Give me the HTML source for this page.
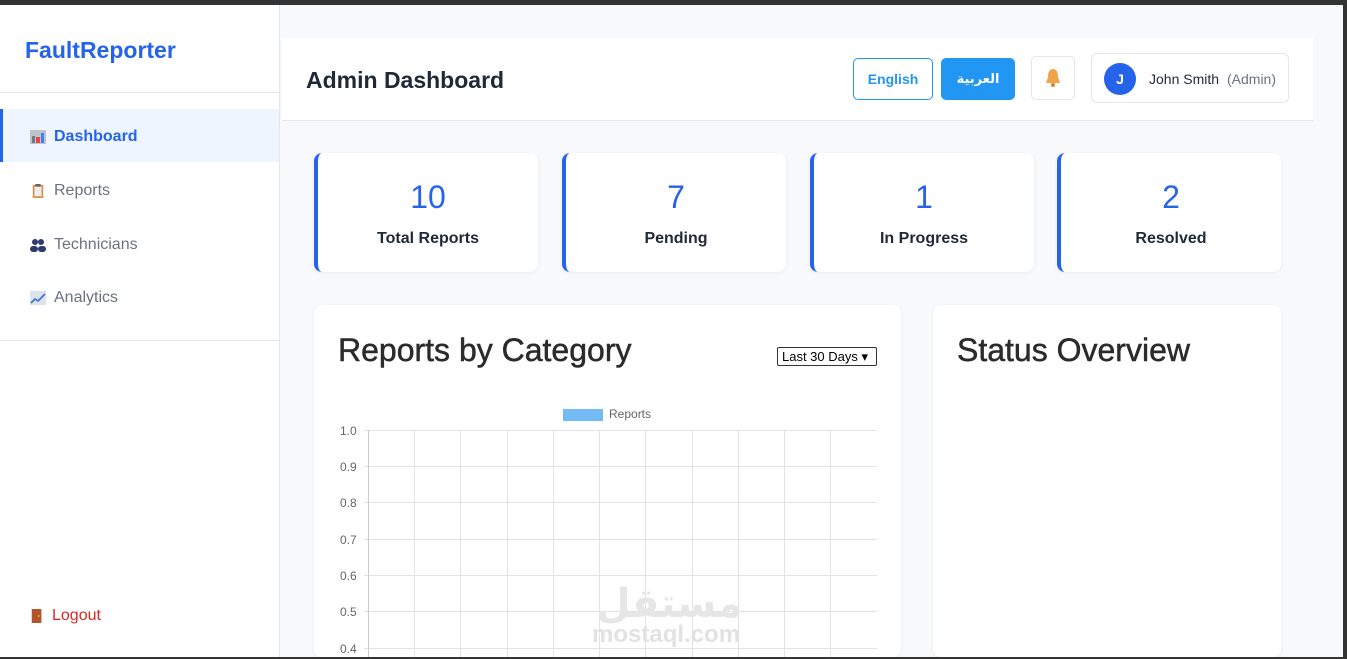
<!DOCTYPE html>
<html><head><meta charset="utf-8"><style>
*{box-sizing:border-box;margin:0;padding:0}
body{width:1347px;height:659px;overflow:hidden;background:#333;font-family:"Liberation Sans","DejaVu Sans",sans-serif;position:relative}
#app{position:absolute;left:0;top:5px;width:1343px;height:652px;background:#f8f9fb;overflow:hidden}
.side{position:absolute;left:0;top:0;width:280px;height:652px;background:#fff;border-right:1px solid #e3e6ea}
.logo{position:absolute;left:25px;top:32px;font-size:23px;font-weight:bold;color:#2563eb}
.hr{position:absolute;left:0;width:279px;height:1px;background:#e3e6ea}
.nav{position:absolute;left:0;width:279px;height:53px;display:flex;align-items:center;padding-left:30px;padding-top:3px;font-size:16px;color:#6b7280}
.nav .ic{width:16px;height:14px;margin-right:8px;display:inline-block}
.nav.act{background:#eef5ff;color:#2563eb;border-left:3px solid #2563eb;padding-left:27px;font-weight:bold}
.logout{color:#dc2626}
.head{position:absolute;left:282px;top:33px;width:1031px;height:83px;background:#fff;border-bottom:1px solid #e3e6ea}
.head h1{position:absolute;left:24px;top:29px;font-size:23px;font-weight:bold;color:#1f2937}
.btn{position:absolute;top:20px;height:42px;border-radius:5px;font-size:14px;font-weight:bold;display:flex;align-items:center;justify-content:center}
.card{position:absolute;top:148px;width:224px;height:119px;background:#fff;border-radius:8px;border-left:4px solid #2563eb;box-shadow:0 1px 4px rgba(0,0,0,.06);text-align:center}
.card .n{margin-top:24px;font-size:32px;color:#2563eb;line-height:40px}
.card .l{margin-top:13px;font-size:16px;color:#1f2937;font-weight:bold}
.panel{position:absolute;top:300px;background:#fff;border-radius:8px;box-shadow:0 1px 4px rgba(0,0,0,.06);height:352px;overflow:hidden}
.panel h2{position:absolute;left:24px;top:27px;font-size:32px;font-weight:normal;color:#2b2b2b;-webkit-text-stroke:0.5px #2b2b2b}
</style></head><body><div id="app">
<div class="side">
<div class="logo">FaultReporter</div>
<div class="hr" style="top:87px"></div>
<div class="nav act" style="top:104px"><svg class="ic" viewBox="0 0 16 14"><rect x="0" y="0" width="16" height="14" fill="#bcc3cb"/><rect x="2" y="6" width="3" height="7" fill="#777"/><rect x="6" y="7" width="4" height="6" fill="#ef4444"/><rect x="11" y="3" width="3" height="10" fill="#3b82f6"/></svg>Dashboard</div>
<div class="nav" style="top:158px"><svg class="ic" viewBox="0 0 16 16"><rect x="2" y="1" width="12" height="15" fill="#d9904a"/><rect x="4" y="3" width="8" height="11" fill="#eee"/><rect x="5" y="0" width="6" height="3" fill="#666"/></svg>Reports</div>
<div class="nav" style="top:212px"><svg class="ic" viewBox="0 0 16 14"><circle cx="5" cy="4" r="3" fill="#2d3a6b"/><circle cx="11" cy="4" r="3" fill="#2d3a6b"/><rect x="0" y="8" width="8" height="6" rx="3" fill="#2d3a6b"/><rect x="8" y="8" width="8" height="6" rx="3" fill="#2d3a6b"/></svg>Technicians</div>
<div class="nav" style="top:265px"><svg class="ic" viewBox="0 0 16 14"><rect width="16" height="14" fill="#dde3ea"/><polyline points="1,12 5,8 8,10 15,3" stroke="#3b6fd6" stroke-width="1.6" fill="none"/></svg>Analytics</div>
<div class="hr" style="top:335px"></div>
<div class="nav logout" style="top:583px"><svg class="ic" viewBox="0 0 16 16" style="width:14px"><rect x="2" y="0" width="11" height="16" fill="#b3542a"/><circle cx="10" cy="8" r="1" fill="#fc0"/></svg>Logout</div>
</div>
<div class="head">
<h1>Admin Dashboard</h1>
<div class="btn" style="left:571px;width:80px;border:1px solid #2196f3;color:#2196f3;background:#fff">English</div>
<div class="btn" style="left:659px;width:74px;background:#2196f3;color:#fff;font-family:'DejaVu Sans',sans-serif;font-size:13px">العربية</div>
<div class="btn" style="left:749px;top:18px;width:44px;height:44px;border:1px solid #e3e6ea;background:#fff"><svg width="18" height="20" viewBox="0 0 18 20"><path d="M9 1C5 1 4 5 4 9L2 15H16L14 9C14 5 13 1 9 1Z" fill="#f0a54a"/><circle cx="9" cy="17" r="2" fill="#d98a2b"/></svg></div>
<div style="position:absolute;left:809px;top:15px;width:198px;height:50px;border:1px solid #e3e6ea;border-radius:6px;background:#fff">
<div style="position:absolute;left:12px;top:9px;width:32px;height:32px;border-radius:50%;background:#2563eb;color:#fff;font-weight:bold;font-size:14px;text-align:center;line-height:32px">J</div>
<div style="position:absolute;left:57px;top:17px;font-size:14px;color:#1f2937">John Smith</div>
<div style="position:absolute;left:135px;top:17px;font-size:14px;color:#6b7280">(Admin)</div>
</div>
</div>
<div class="card" style="left:314px"><div class="n">10</div><div class="l">Total Reports</div></div>
<div class="card" style="left:562px"><div class="n">7</div><div class="l">Pending</div></div>
<div class="card" style="left:810px"><div class="n">1</div><div class="l">In Progress</div></div>
<div class="card" style="left:1057px"><div class="n">2</div><div class="l">Resolved</div></div>
<div class="panel" style="left:314px;width:587px">
<h2>Reports by Category</h2>
<div style="position:absolute;left:463px;top:42px;width:100px;height:19px;border:1px solid #333;border-radius:2px;font-size:13px;color:#000;padding-left:4px;line-height:17px">Last 30 Days ▾</div>
<svg style="position:absolute;left:0;top:0" width="587" height="360" font-family="Liberation Sans,sans-serif" font-size="12" fill="#666">
<rect x="249" y="104" width="40" height="12" fill="#74baf5"/><text x="295" y="113">Reports</text>
<g stroke="#e3e3e3" stroke-width="1">
<line x1="50" y1="125.5" x2="563" y2="125.5"/><line x1="50" y1="161.5" x2="563" y2="161.5"/><line x1="50" y1="197.5" x2="563" y2="197.5"/><line x1="50" y1="234.5" x2="563" y2="234.5"/><line x1="50" y1="270.5" x2="563" y2="270.5"/><line x1="50" y1="306.5" x2="563" y2="306.5"/><line x1="50" y1="343.5" x2="563" y2="343.5"/>
<line x1="100.5" y1="125" x2="100.5" y2="360"/><line x1="146.5" y1="125" x2="146.5" y2="360"/><line x1="193.5" y1="125" x2="193.5" y2="360"/><line x1="239.5" y1="125" x2="239.5" y2="360"/><line x1="285.5" y1="125" x2="285.5" y2="360"/><line x1="331.5" y1="125" x2="331.5" y2="360"/><line x1="378.5" y1="125" x2="378.5" y2="360"/><line x1="424.5" y1="125" x2="424.5" y2="360"/><line x1="470.5" y1="125" x2="470.5" y2="360"/><line x1="516.5" y1="125" x2="516.5" y2="360"/>
</g>
<line x1="54.5" y1="125" x2="54.5" y2="360" stroke="#ccc"/>
<text x="26" y="130">1.0</text><text x="26" y="166">0.9</text><text x="26" y="202">0.8</text><text x="26" y="239">0.7</text><text x="26" y="275">0.6</text><text x="26" y="311">0.5</text><text x="26" y="348">0.4</text>
<text x="282" y="312" font-size="40" font-weight="bold" fill="#e6e6e6" font-family="DejaVu Sans,sans-serif">مستقل</text>
<text x="278" y="337" font-size="24" font-weight="bold" fill="#e2e2e2">mostaql.com</text>
</svg>
</div>
<div class="panel" style="left:933px;width:348px"><h2>Status Overview</h2></div>
</div></body></html>
